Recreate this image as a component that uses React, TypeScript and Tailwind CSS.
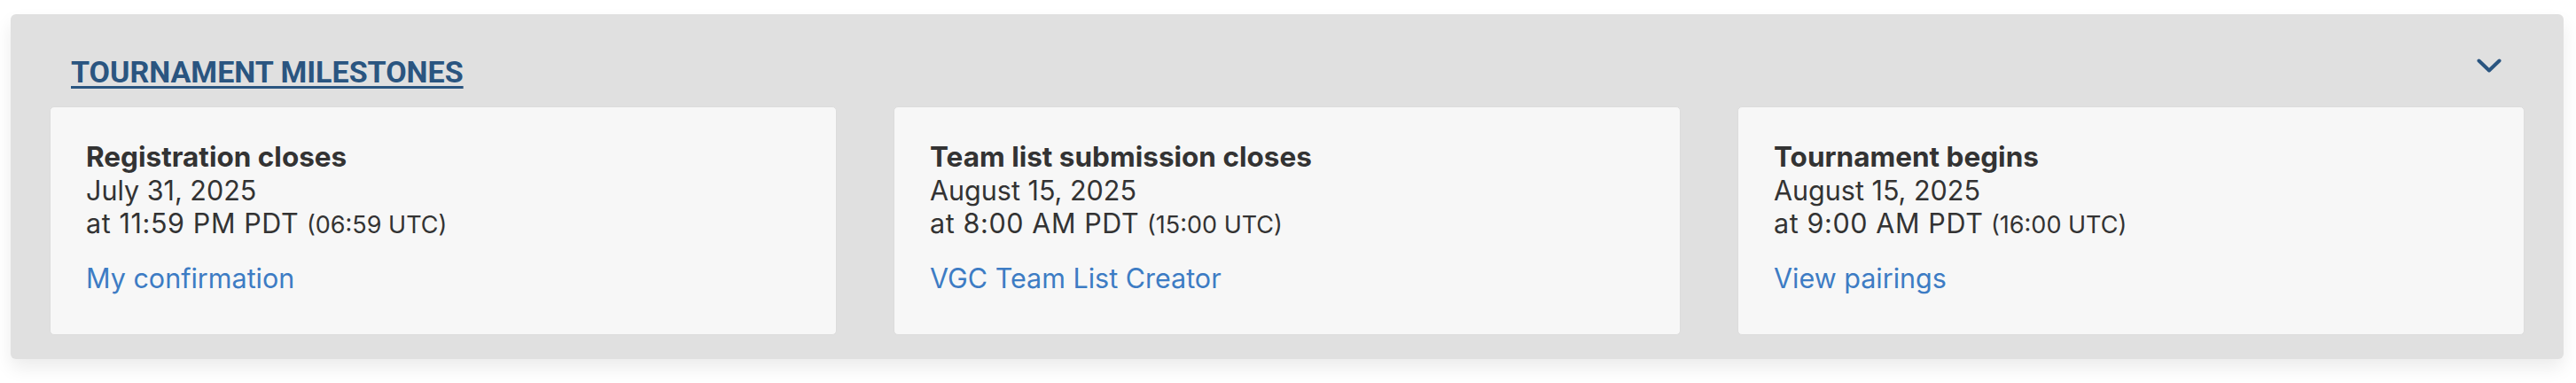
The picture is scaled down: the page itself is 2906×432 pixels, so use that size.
import React from "react";

type Milestone = {
  title: string;
  date: string;
  time: string;
  utc: string;
  link: string;
};

const milestones: Milestone[] = [
  {
    title: "Registration closes",
    date: "July 31, 2025",
    time: "at 11:59 PM PDT",
    utc: "(06:59 UTC)",
    link: "My confirmation",
  },
  {
    title: "Team list submission closes",
    date: "August 15, 2025",
    time: "at 8:00 AM PDT",
    utc: "(15:00 UTC)",
    link: "VGC Team List Creator",
  },
  {
    title: "Tournament begins",
    date: "August 15, 2025",
    time: "at 9:00 AM PDT",
    utc: "(16:00 UTC)",
    link: "View pairings",
  },
];

const MilestoneCard = ({ m }: { m: Milestone }) => {
  return (
    <div className="h-[258px] w-[888px] rounded-[5px] border border-[#dcdcdc] bg-[#f7f7f7] pl-[40px] pt-[37px] text-[30.5px] leading-[37.5px] text-[#333333]">
      <p className="text-[31.5px] font-bold">{m.title}</p>
      <p>{m.date}</p>
      <p>
        <span className="tracking-[0.02em]">{m.time}</span>{" "}
        <span className="text-[27px]">{m.utc}</span>
      </p>
      <p className="mt-[22px]">
        <a href="#" className="text-[#3d7cc4]">
          {m.link}
        </a>
      </p>
    </div>
  );
};

const App = () => {
  return (
    <div className="h-[432px] w-[2906px] bg-white pl-[12px] pr-[14px] pt-[16px] font-['Inter',sans-serif]">
      <div className="h-[389px] rounded-[6px] bg-[#e0e0e0] shadow-[0_10px_20px_rgba(0,0,0,0.08)]">
        <div className="flex items-start justify-between pl-[68px] pr-[70px] pt-[45px]">
          <h2 className="font-['Roboto',sans-serif] text-[34px] font-bold uppercase leading-[40px] text-[#2a5580] underline decoration-[3px] underline-offset-[4px]">
            Tournament Milestones
          </h2>
          <button className="mt-[5px] text-[#2a5580]">
            <svg width="28" height="16" viewBox="0 0 28 16" fill="none">
              <polyline
                points="2.5,2.5 14,13.5 25.5,2.5"
                stroke="currentColor"
                strokeWidth="4"
                strokeLinecap="round"
                strokeLinejoin="round"
              />
            </svg>
          </button>
        </div>
        <div className="mt-[19px] flex justify-between px-[44px]">
          {milestones.map((m) => (
            <MilestoneCard key={m.title} m={m} />
          ))}
        </div>
      </div>
    </div>
  );
};

export default App;
